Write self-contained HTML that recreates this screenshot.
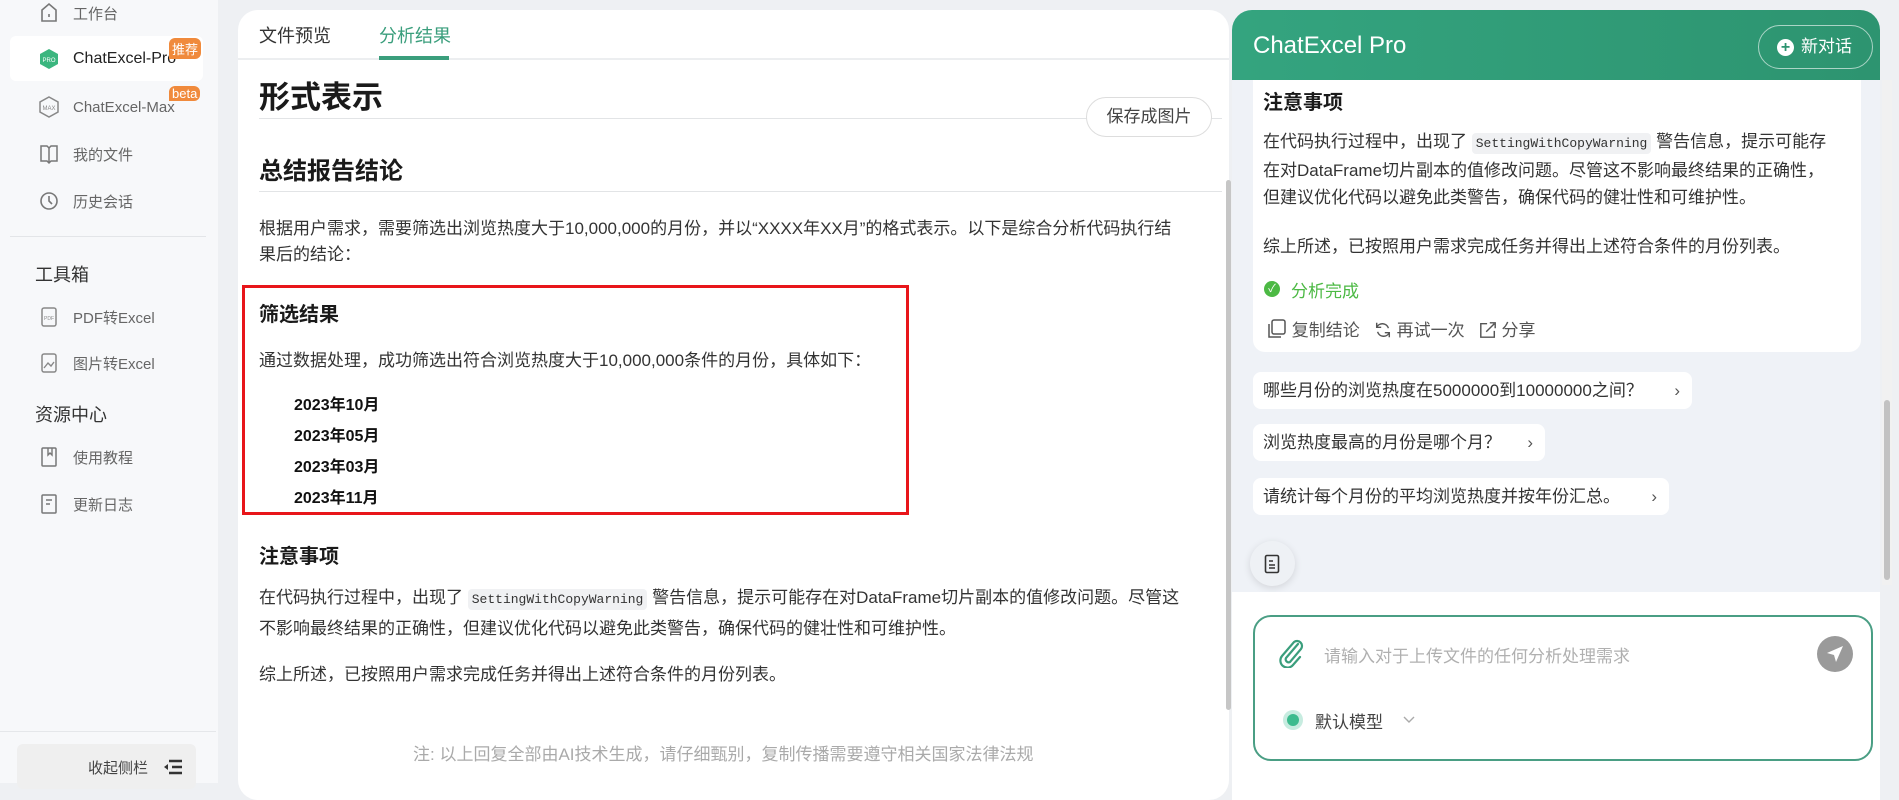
<!DOCTYPE html>
<html><head><meta charset="utf-8"><style>
*{box-sizing:border-box;margin:0;padding:0}
body{width:1899px;height:783px;overflow:hidden;background:#eef0f3;font-family:"Liberation Sans","Noto Sans CJK SC",sans-serif;color:#222;position:relative}
.a{position:absolute;white-space:nowrap}
.side{position:absolute;left:0;top:0;width:218px;height:783px;background:#f7f8fa}
.si{position:absolute;left:39px;font-size:15px;color:#666;display:flex;align-items:center}
.si svg{margin-right:14px}
.main{position:absolute;left:238px;top:10px;width:991px;height:790px;background:#fff;border-radius:20px}
.p{font-size:17px;color:#333}
code{font-family:"Liberation Mono",monospace;font-size:13px;background:#f0f1f3;padding:3px 4px;border-radius:4px;color:#333}
.right{position:absolute;left:1232px;top:10px;width:648px;height:790px;background:#eff2f7;border-radius:20px 20px 0 0;overflow:hidden}
.chip{position:absolute;left:21px;height:37px;background:#fff;border-radius:8px;font-size:17px;color:#333;line-height:37px;padding-left:10px}
.chip span{position:absolute;right:12px;color:#555}
</style></head><body>
<div class="side">
 <div class="si" style="top:2px"><svg width="20" height="22" viewBox="0 0 20 22"><path d="M3 8 L10 2 L17 8 V19 H3 Z" fill="none" stroke="#777" stroke-width="1.6"/><path d="M10 12v3" stroke="#777" stroke-width="1.6"/></svg>工作台</div>
 <div class="a" style="left:10px;top:36px;width:193px;height:45px;background:#fff;border-radius:6px"></div>
 <div class="si" style="top:48px;color:#222;font-size:16px"><svg width="20" height="22" viewBox="0 0 20 22"><path d="M10 1 L19 6 V16 L10 21 L1 16 V6 Z" fill="#3bb67f"/><text x="10" y="14" font-size="6" fill="#fff" text-anchor="middle" font-family="Liberation Sans">PRO</text></svg>ChatExcel-Pro</div>
 <div class="a" style="left:169px;top:38px;background:#f08a3c;color:#fff;font-size:13px;padding:1px 3px;border-radius:6px 6px 6px 0">推荐</div>
 <div class="si" style="top:96px"><svg width="20" height="22" viewBox="0 0 20 22"><path d="M10 1 L19 6 V16 L10 21 L1 16 V6 Z" fill="none" stroke="#888" stroke-width="1.5"/><text x="10" y="14" font-size="6" fill="#888" text-anchor="middle">MAX</text></svg>ChatExcel-Max</div>
 <div class="a" style="left:169px;top:86px;background:#f08a3c;color:#fff;font-size:13px;padding:0 3px;border-radius:6px 6px 6px 0">beta</div>
 <div class="si" style="top:143px"><svg width="20" height="22" viewBox="0 0 20 22"><path d="M2 3 H8 L10 5 L12 3 H18 V18 H12 L10 20 L8 18 H2 Z" fill="none" stroke="#777" stroke-width="1.5"/><path d="M10 5 V20" stroke="#777" stroke-width="1.5"/></svg>我的文件</div>
 <div class="si" style="top:190px"><svg width="20" height="22" viewBox="0 0 20 22"><circle cx="10" cy="11" r="8" fill="none" stroke="#777" stroke-width="1.6"/><path d="M10 6 V11 L13 14" fill="none" stroke="#777" stroke-width="1.6"/></svg>历史会话</div>
 <div class="a" style="left:10px;top:236px;width:196px;height:1px;background:#e3e5e8"></div>
 <div class="a" style="left:35px;top:261px;font-size:18px;color:#333">工具箱</div>
 <div class="si" style="top:306px"><svg width="20" height="22" viewBox="0 0 20 22"><rect x="3" y="2" width="14" height="18" rx="2" fill="none" stroke="#888" stroke-width="1.5"/><text x="10" y="14" font-size="5" fill="#888" text-anchor="middle">PDF</text></svg>PDF转Excel</div>
 <div class="si" style="top:352px"><svg width="20" height="22" viewBox="0 0 20 22"><rect x="3" y="2" width="14" height="18" rx="2" fill="none" stroke="#888" stroke-width="1.5"/><path d="M5 16 L9 11 L12 14 L15 10" fill="none" stroke="#888" stroke-width="1.4"/></svg>图片转Excel</div>
 <div class="a" style="left:35px;top:401px;font-size:18px;color:#333">资源中心</div>
 <div class="si" style="top:446px"><svg width="20" height="22" viewBox="0 0 20 22"><rect x="3" y="2" width="14" height="18" rx="1" fill="none" stroke="#777" stroke-width="1.5"/><path d="M9 2 V9 L11 7 L13 9 V2" fill="none" stroke="#777" stroke-width="1.4"/></svg>使用教程</div>
 <div class="si" style="top:493px"><svg width="20" height="22" viewBox="0 0 20 22"><rect x="3" y="2" width="14" height="18" rx="1" fill="none" stroke="#777" stroke-width="1.5"/><path d="M7 7 H13 M7 11 H11" stroke="#777" stroke-width="1.4"/></svg>更新日志</div>
 <div class="a" style="left:0;top:731px;width:216px;height:1px;background:#e5e7ea"></div>
 <div class="a" style="left:17px;top:744px;width:179px;height:45px;background:#efefef;border-radius:6px"></div>
 <div class="a" style="left:88px;top:757px;font-size:15px;color:#444">收起侧栏</div>
 <svg class="a" style="left:163px;top:759px" width="20" height="16" viewBox="0 0 20 16"><path d="M6 2H19M9 8H19M6 14H19" stroke="#333" stroke-width="2.4"/><path d="M1 8 L5 5 V11Z" fill="#333"/></svg>
</div>

<div class="main">
 <div class="a" style="left:21px;top:12px;font-size:18px;color:#333">文件预览</div>
 <div class="a" style="left:141px;top:12px;font-size:18px;color:#3a9e7c">分析结果</div>
 <div class="a" style="left:0;top:48px;width:991px;height:2px;background:#eceef0"></div>
 <div class="a" style="left:141px;top:46px;width:70px;height:4px;background:#3a9e7c"></div>
 <div class="a" style="left:21px;top:62px;font-size:31px;font-weight:bold;color:#1a1a1a">形式表示</div>
 <div class="a" style="left:21px;top:108px;width:963px;height:1px;background:#e2e4e6"></div>
 <div class="a" style="left:848px;top:87px;width:126px;height:40px;border:1px solid #ddd;border-radius:20px;font-size:17px;color:#444;text-align:center;line-height:38px;background:#fff">保存成图片</div>
 <div class="a" style="left:21px;top:141px;font-size:24px;font-weight:bold;color:#1a1a1a">总结报告结论</div>
 <div class="a" style="left:21px;top:181px;width:963px;height:1px;background:#e2e4e6"></div>
 <div class="a p" style="left:21px;top:206px;line-height:26px">根据用户需求，需要筛选出浏览热度大于10,000,000的月份，并以“XXXX年XX月”的格式表示。以下是综合分析代码执行结<br>果后的结论：</div>
 <div class="a" style="left:4px;top:275px;width:667px;height:230px;border:3px solid #e8161a"></div>
 <div class="a" style="left:21px;top:288px;font-size:20px;font-weight:bold;color:#1a1a1a">筛选结果</div>
 <div class="a p" style="left:21px;top:336px">通过数据处理，成功筛选出符合浏览热度大于10,000,000条件的月份，具体如下：</div>
 <div class="a" style="left:56px;top:380px;font-size:16px;font-weight:bold;line-height:31px;color:#111">2023年10月<br>2023年05月<br>2023年03月<br>2023年11月</div>
 <div class="a" style="left:21px;top:530px;font-size:20px;font-weight:bold;color:#1a1a1a">注意事项</div>
 <div class="a p" style="left:21px;top:573px;line-height:29px">在代码执行过程中，出现了 <code>SettingWithCopyWarning</code> 警告信息，提示可能存在对DataFrame切片副本的值修改问题。尽管这<br>不影响最终结果的正确性，但建议优化代码以避免此类警告，确保代码的健壮性和可维护性。</div>
 <div class="a p" style="left:21px;top:650px">综上所述，已按照用户需求完成任务并得出上述符合条件的月份列表。</div>
 <div class="a" style="left:988px;top:170px;width:5px;height:530px;background:#c6c6c6;border-radius:3px"></div>
 <div class="a" style="left:175px;top:730px;font-size:17px;color:#aaa">注: 以上回复全部由AI技术生成，请仔细甄别，复制传播需要遵守相关国家法律法规</div>
</div>

<div class="right">
 <div class="a" style="left:0;top:0;width:648px;height:70px;background:linear-gradient(90deg,#34a47f,#2d9470);"></div>
 <div class="a" style="left:21px;top:22px;font-size:24px;color:#fff">ChatExcel Pro</div>
 <div class="a" style="left:526px;top:15px;width:115px;height:44px;border:1px solid rgba(255,255,255,.6);border-radius:22px;color:#fff;font-size:17px;line-height:42px;padding-left:42px"><span style="position:absolute;left:18px;top:13px;width:17px;height:17px;border-radius:50%;background:#fff;color:#2d9470;font-size:16px;line-height:17px;text-align:center;font-weight:bold">+</span>新对话</div>
 <div class="a" style="left:21px;top:70px;width:608px;height:272px;background:#fff;border-radius:0 0 12px 12px"></div>
 <div class="a" style="left:31px;top:76px;font-size:20px;font-weight:bold;color:#1a1a1a">注意事项</div>
 <div class="a p" style="left:31px;top:118px;line-height:27px">在代码执行过程中，出现了 <code>SettingWithCopyWarning</code> 警告信息，提示可能存<br>在对DataFrame切片副本的值修改问题。尽管这不影响最终结果的正确性，<br>但建议优化代码以避免此类警告，确保代码的健壮性和可维护性。</div>
 <div class="a p" style="left:31px;top:222px">综上所述，已按照用户需求完成任务并得出上述符合条件的月份列表。</div>
 <div class="a" style="left:32px;top:271px;width:16px;height:16px;border-radius:50%;background:#4cb944;color:#fff;font-size:11px;text-align:center;line-height:16px">✓</div>
 <div class="a" style="left:59px;top:267px;font-size:17px;color:#4cb944">分析完成</div>
 <div class="a" style="left:35px;top:306px;font-size:17px;color:#555">
  <svg width="20" height="20" viewBox="0 0 20 20" style="vertical-align:-3px"><rect x="5" y="1" width="13" height="14" rx="2" fill="none" stroke="#555" stroke-width="1.5"/><path d="M2 5V18H14" fill="none" stroke="#555" stroke-width="1.5"/></svg> 复制结论&nbsp;&nbsp;
  <svg width="18" height="18" viewBox="0 0 20 20" style="vertical-align:-3px"><path d="M16 8A7 7 0 0 0 3 7M4 12A7 7 0 0 0 17 13" fill="none" stroke="#555" stroke-width="1.6"/><path d="M3 2V7H8M17 18V13H12" fill="none" stroke="#555" stroke-width="1.6"/></svg> 再试一次&nbsp;&nbsp;
  <svg width="18" height="18" viewBox="0 0 20 20" style="vertical-align:-3px"><path d="M9 3H2V18H17V11" fill="none" stroke="#555" stroke-width="1.6"/><path d="M8 12L17 3M12 2H18V8" fill="none" stroke="#555" stroke-width="1.6"/></svg> 分享
 </div>
 <div class="chip" style="top:362px;width:439px">哪些月份的浏览热度在5000000到10000000之间？<span>›</span></div>
 <div class="chip" style="top:414px;width:292px">浏览热度最高的月份是哪个月？<span>›</span></div>
 <div class="chip" style="top:468px;width:416px">请统计每个月份的平均浏览热度并按年份汇总。<span>›</span></div>
 <div class="a" style="left:18px;top:531px;width:45px;height:45px;border-radius:50%;background:#eef1f5;box-shadow:0 2px 8px rgba(0,0,0,.12)"></div>
 <svg class="a" style="left:32px;top:544px" width="16" height="20" viewBox="0 0 16 20"><rect x="1.5" y="1.5" width="13" height="17" rx="1.5" fill="none" stroke="#333" stroke-width="1.6"/><path d="M5 7H9M5 11H11M5 14H11" stroke="#333" stroke-width="1.5"/></svg>
 <div class="a" style="left:0;top:582px;width:648px;height:210px;background:#fff"></div>
 <div class="a" style="left:21px;top:605px;width:620px;height:146px;border:2px solid #4a9e84;border-radius:18px"></div>
 <svg class="a" style="left:46px;top:628px" width="26" height="30" viewBox="0 0 26 30"><path d="M20 6 L8 20 A3 3 0 0 0 12 24 L23 11 A5 5 0 0 0 16 4 L4 18 A7 7 0 0 0 15 27 L22 19" fill="none" stroke="#3a9e7c" stroke-width="2.2" stroke-linecap="round"/></svg>
 <div class="a" style="left:92px;top:632px;font-size:17px;color:#b0b0b0">请输入对于上传文件的任何分析处理需求</div>
 <div class="a" style="left:585px;top:626px;width:36px;height:36px;border-radius:50%;background:#9a9a9a"></div>
 <svg class="a" style="left:593px;top:634px" width="20" height="20" viewBox="0 0 20 20"><path d="M18 2 L2 9 L9 11 L11 18 Z" fill="#fff"/></svg>
 <div class="a" style="left:51px;top:700px;width:20px;height:20px;border-radius:50%;background:#c7ece0"></div>
 <div class="a" style="left:55px;top:704px;width:12px;height:12px;border-radius:50%;background:#3dbb8e"></div>
 <div class="a" style="left:83px;top:698px;font-size:17px;color:#444">默认模型</div>
 <svg class="a" style="left:170px;top:705px" width="14" height="10" viewBox="0 0 14 10"><path d="M2 2L7 7L12 2" fill="none" stroke="#aaa" stroke-width="1.4"/></svg>
</div>
<div class="a" style="left:1882px;top:80px;width:10px;height:505px;background:#f1f1f1"></div>
<div class="a" style="left:1884px;top:400px;width:6px;height:180px;background:#c2c2c2;border-radius:3px"></div>
</body></html>
